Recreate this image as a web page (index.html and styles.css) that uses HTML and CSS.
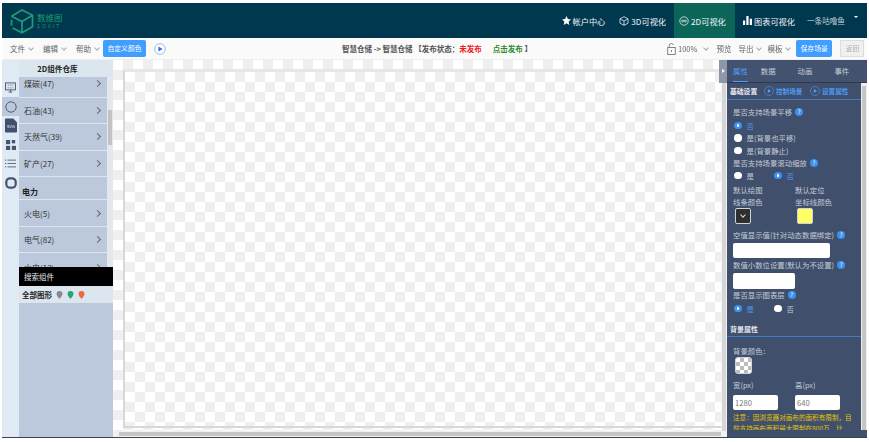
FILE: index.html
```html
<!DOCTYPE html>
<html>

<head>
  <title>数维图 2D可视化</title>
  <link rel="stylesheet" href="styles.css">
</head>

<body>
  <div class="app">
    <div class="header">
      <div class="logo">
        <svg class="logo-mark" width="28" height="28" viewBox="0 0 24 24" fill="none" stroke="#1f9c72" stroke-width="1.5">
          <path d="M3 8 L12 2.5 L21 7 V17 L12 22 L4 18" />
          <path d="M3 8 L12 12.5 L21 7 M12 12.5 V22 M3 11 V16" />
        </svg>
        <div class="logo-text">
          <div class="logo-cn">数维图</div>
          <div class="logo-en">SOVIT</div>
        </div>
      </div>
      <div class="nav">
        <a class="nav-item">
          <svg width="9" height="9" viewBox="0 0 10 10"><path fill="#fff" d="M5 0 L6.5 3.4 L10 3.8 L7.4 6.2 L8.1 10 L5 8.1 L1.9 10 L2.6 6.2 L0 3.8 L3.5 3.4 Z" /></svg>
          帐户中心
        </a>
        <a class="nav-item">
          <svg width="10" height="10" viewBox="0 0 10 10" fill="none" stroke="#e4ecef" stroke-width=".8"><path d="M5 .7 L9 2.8 V7.2 L5 9.3 L1 7.2 V2.8 Z M1 2.8 L5 5 L9 2.8 M5 5 V9.3" /></svg>
          3D可视化
        </a>
        <a class="nav-item nav-active">
          <svg width="10" height="10" viewBox="0 0 10 10" fill="none" stroke="#e4ecef" stroke-width=".8"><circle cx="5" cy="5" r="4.2" /><circle cx="3.6" cy="5" r="1" /><circle cx="6.4" cy="5" r="1" /></svg>
          2D可视化
        </a>
        <a class="nav-item">
          <svg width="9" height="9" viewBox="0 0 10 10"><path fill="#fff" d="M0 5 H2.4 V10 H0 Z M3.7 0 H6.2 V10 H3.7 Z M7.5 3 H10 V10 H7.5 Z" /></svg>
          图表可视化
        </a>
        <a class="nav-item nav-user">一条咕噜鱼<span class="caret"></span></a>
      </div>
    </div>

    <div class="toolbar">
      <div class="tool-left">
        <span class="menu">文件<i class="chev"></i></span>
        <span class="menu">编辑<i class="chev"></i></span>
        <span class="menu">帮助<i class="chev"></i></span>
        <span class="btn-blue btn-color">自定义颜色</span>
        <svg class="play-top" width="12" height="12" viewBox="0 0 12 12"><circle cx="6" cy="6" r="5.3" fill="#fff" stroke="#9db8e8" /><path d="M4.4 3.4 L8.6 6 L4.4 8.6 Z" fill="#2f6fe0" /></svg>
      </div>
      <div class="tool-title">智慧仓储 -&gt; 智慧仓储 【发布状态：<span class="red">未发布</span><span class="green">点击发布</span> 】</div>
      <div class="tool-right">
        <svg width="9" height="12" viewBox="0 0 9 12" fill="none" stroke="#777" stroke-width=".9"><rect x=".7" y="4.5" width="7.6" height="7" /><path d="M2.2 4.5 V2.2 A2.2 2 0 0 1 6.5 2" /><path d="M4.5 7 V9" /></svg>
        <span class="menu zoom-val">100%<i class="chev"></i></span>
        <span class="menu preview">预览</span>
        <span class="menu">导出<i class="chev"></i></span>
        <span class="menu">模板<i class="chev"></i></span>
        <span class="btn-blue btn-save">保存场景</span>
        <span class="btn-back">返回</span>
      </div>
    </div>

    <div class="main">
      <div class="rail">
        <div class="rail-top"></div>
        <div class="rail-icon">
          <svg width="11" height="11" viewBox="0 0 12 12" fill="none" stroke="#46566f"><rect x=".6" y="1" width="10.8" height="7.6" fill="#dfe6ee" /><path d="M4 11 H8 M6 8.6 V11" /><path d="M3 6.4 H9 M3 3.4 H9" stroke-width=".7" stroke-dasharray="1.5 1" /></svg>
        </div>
        <div class="rail-icon rail-on">
          <svg width="12" height="12" viewBox="0 0 13 13" fill="none" stroke="#46566f"><circle cx="6.5" cy="6.5" r="5.6" /></svg>
        </div>
        <div class="rail-icon">
          <svg width="12" height="15" viewBox="0 0 13 15"><path fill="#3f4f6c" d="M1 0 H9 L13 4 V14 Q13 15 12 15 H1 Q0 15 0 14 V1 Q0 0 1 0 Z" /><text x="6.5" y="10" text-anchor="middle" class="svg-label">SVG</text></svg>
        </div>
        <div class="rail-icon">
          <svg width="10" height="10" viewBox="0 0 12 12" fill="#46566f"><rect x="0" y="0" width="5" height="5" /><rect x="7" y="0" width="4" height="4" /><rect x="0" y="7" width="5" height="5" /><rect x="7" y="7" width="5" height="5" /></svg>
        </div>
        <div class="rail-icon">
          <svg width="11" height="9" viewBox="0 0 13 10" stroke="#46566f"><path d="M0 1 H1.5 M3 1 H13 M0 5 H1.5 M3 5 H13 M0 9 H1.5 M3 9 H13" /></svg>
        </div>
        <div class="rail-icon">
          <svg width="12" height="12" viewBox="0 0 13 13" fill="none" stroke="#46566f" stroke-width="2.4"><rect x="1.4" y="1.4" width="10.2" height="10.2" rx="4" /></svg>
        </div>
      </div>

      <div class="lib">
        <div class="lib-title">2D组件仓库</div>
        <div class="lib-scroll">
          <div class="lib-list">
            <div class="lib-row lib-row-first">煤碳(47)<i class="arrow"></i></div>
            <div class="lib-row">石油(43)<i class="arrow"></i></div>
            <div class="lib-row">天然气(39)<i class="arrow"></i></div>
            <div class="lib-row">矿产(27)<i class="arrow"></i></div>
            <div class="lib-group">电力</div>
            <div class="lib-row">火电(5)<i class="arrow"></i></div>
            <div class="lib-row">电气(82)<i class="arrow"></i></div>
            <div class="lib-row lib-row-cut">水电(13)<i class="arrow"></i></div>
          </div>
          <div class="lib-bar"><div class="lib-thumb"></div></div>
        </div>
        <div class="lib-search">搜索组件</div>
        <div class="lib-all">全部图形
          <svg width="7" height="8" viewBox="0 0 7 8"><path fill="#8a8a8a" d="M3.5 0 A3 3 0 0 1 6.5 3 Q6.5 5 3.5 8 Q.5 5 .5 3 A3 3 0 0 1 3.5 0 Z" /></svg>
          <svg width="7" height="8" viewBox="0 0 7 8"><path fill="#2aa56f" d="M3.5 0 A3 3 0 0 1 6.5 3 Q6.5 5 3.5 8 Q.5 5 .5 3 A3 3 0 0 1 3.5 0 Z" /></svg>
          <svg width="7" height="8" viewBox="0 0 7 8"><path fill="#f0683c" d="M3.5 0 A3 3 0 0 1 6.5 3 Q6.5 5 3.5 8 Q.5 5 .5 3 A3 3 0 0 1 3.5 0 Z" /></svg>
        </div>
        <div class="lib-rest"></div>
      </div>

      <div class="stage">
        <div class="stage-top">
          <div class="stage-view">
            <div class="sheet"></div>
          </div>
          <div class="stage-vbar"><div class="stage-vthumb"></div></div>
        </div>
        <div class="stage-bar"><div class="stage-thumb"></div></div>
        <div class="handle"></div>
      </div>

      <div class="props">
        <div class="tabs">
          <span class="tab tab-on">属性</span>
          <span class="tab">数据</span>
          <span class="tab">动画</span>
          <span class="tab">事件</span>
        </div>
        <div class="props-body">
          <div class="props-scroll">
            <div class="sub-head">
              <span class="sub-title">基础设置</span>
              <span class="sub-link"><svg width="10" height="10" viewBox="0 0 10 10"><circle cx="5" cy="5" r="4.5" fill="none" stroke="#4d8fe6" stroke-width=".7" /><path d="M3.8 3 L7 5 L3.8 7 Z" fill="#5aa2f5" /></svg>控制场景</span>
              <span class="sub-link"><svg width="10" height="10" viewBox="0 0 10 10"><circle cx="5" cy="5" r="4.5" fill="none" stroke="#4d8fe6" stroke-width=".7" /><path d="M3.8 3 L7 5 L3.8 7 Z" fill="#5aa2f5" /></svg>设置属性</span>
            </div>

            <div class="form">
              <div class="label label-first">是否支持场景平移<i class="help">?</i></div>
              <div class="radio-line"><i class="radio radio-on"></i><span class="blue">否</span></div>
              <div class="radio-line"><i class="radio"></i>是(背景也平移)</div>
              <div class="radio-line"><i class="radio"></i>是(背景静止)</div>
              <div class="label">是否支持场景滚动缩放<i class="help">?</i></div>
              <div class="radio-pair">
                <div class="radio-line"><i class="radio"></i>是</div>
                <div class="radio-line"><i class="radio radio-on"></i><span class="blue">否</span></div>
              </div>
              <div class="two-col">
                <div class="label">默认绘图</div>
                <div class="label">默认定位</div>
                <div class="label">线条颜色</div>
                <div class="label">坐标线颜色</div>
                <div class="swatch swatch-dark"><i class="chev chev-light"></i></div>
                <div class="swatch swatch-yellow"></div>
              </div>
              <div class="label label-gap">空值显示值(针对动态数据绑定)<i class="help">?</i></div>
              <div class="field field-wide"></div>
              <div class="label">数值小数位设置(默认为不设置)<i class="help">?</i></div>
              <div class="field field-short"></div>
              <div class="label">是否显示图表层<i class="help">?</i></div>
              <div class="radio-pair radio-pair-tall">
                <div class="radio-line"><i class="radio radio-on"></i><span class="blue">是</span></div>
                <div class="radio-line"><i class="radio"></i>否</div>
              </div>
            </div>

            <div class="section-title">背景属性</div>
            <div class="form form-bg">
              <div class="label">背景颜色：</div>
              <div class="swatch swatch-grid"></div>
              <div class="size-row">
                <div class="size-col"><div class="label">宽(px)</div><div class="field field-size">1280</div></div>
                <div class="size-col"><div class="label">高(px)</div><div class="field field-size">640</div></div>
              </div>
              <div class="note">注意：因浏览器对画布的面积有限制，目前支持画布面积最大限制在800万，比</div>
            </div>
          </div>
          <div class="props-bar"><div class="props-thumb"></div></div>
        </div>
      </div>
    </div>
  </div>
</body>

</html>
```

FILE: styles.css
```css
* {
  box-sizing: border-box;
}

body {
  margin: 0;
  background: #fff;
  font-family: "Noto Sans CJK SC", "Open Sans", sans-serif;
  font-size: 8px;
  overflow: hidden;
}

.app {
  width: 865px;
  height: 435px;
  margin: 3px 0 0 2px;
  display: flex;
  flex-direction: column;
  border-bottom: 1px solid #3c4350;
  filter: blur(0.35px);
}

/* top bar */
.header {
  height: 35px;
  background: #00384f;
  display: flex;
  justify-content: space-between;
  flex: none;
}

.logo {
  display: flex;
  align-items: center;
  gap: 1px;
  padding-left: 6px;
}

.logo-cn {
  color: #1f9c72;
  font-size: 8.5px;
  line-height: 10px;
}

.logo-en {
  color: #1f9c72;
  font-size: 5px;
  line-height: 7px;
  letter-spacing: 2px;
}

.nav {
  display: flex;
  align-items: stretch;
}

.nav-item {
  display: flex;
  align-items: center;
  gap: 2px;
  padding: 0 6px;
  margin-left: 2px;
  color: #f2f6f7;
  font-size: 8.2px;
  white-space: nowrap;
}

.nav-active {
  background: #0b6558;
  width: 61px;
  padding: 0 5px;
}

.nav-user {
  color: #c3ced4;
  width: 66px;
  padding: 0 0 0 6px;
  margin: 0;
  font-size: 7.6px;
}

.caret {
  width: 0;
  height: 0;
  margin: -5px 0 0 7px;
  border: 2px solid transparent;
  border-top: 2.5px solid #fff;
}

/* tool row */
.toolbar {
  height: 22px;
  flex: none;
  display: flex;
  align-items: center;
  background: #fafafa;
  border-bottom: 1px solid #eee;
  color: #666;
  font-size: 7.5px;
}

.tool-left {
  width: 340px;
  flex: none;
  display: flex;
  align-items: center;
  padding-left: 8px;
}

.menu {
  display: inline-flex;
  flex: none;
  align-items: center;
  margin-right: 10px;
  white-space: nowrap;
}

.chev {
  display: inline-block;
  width: 4px;
  height: 4px;
  margin: -2px 0 0 4px;
  border-right: 1px solid #aaa;
  border-bottom: 1px solid #aaa;
  transform: rotate(45deg);
}

.btn-blue {
  flex: none;
  background: #409eff;
  color: #fff;
  border-radius: 2px;
  height: 17px;
  line-height: 17px;
  text-align: center;
  font-size: 6.8px;
}

.btn-color {
  width: 43px;
  margin-left: -6px;
}

.play-top {
  margin-left: 8px;
}

.tool-title {
  flex: 1;
  color: #555;
  font-weight: 700;
  white-space: pre;
}

.red {
  color: #f01818;
  margin-right: 11px;
}

.green {
  color: #2d8a2d;
}

.tool-right {
  display: flex;
  align-items: center;
  width: 200px;
  flex: none;
}

.tool-right .menu {
  margin-right: 6px;
}

.tool-right .zoom-val {
  margin-left: 2px;
  margin-right: 8px;
}

.zoom-val .chev {
  margin-left: 7px;
}

.tool-right .preview {
  margin-right: 7px;
}

.btn-back {
  flex: none;
  width: 24px;
  height: 17px;
  line-height: 15px;
  margin-left: 8px;
  text-align: center;
  border: 1px solid #ddd;
  background: #f0f0f0;
  color: #aaa;
  font-size: 6.5px;
}

.btn-save {
  width: 36px;
}

/* main area */
.main {
  flex: 1;
  min-height: 0;
  display: flex;
}

.rail {
  width: 17px;
  flex: none;
  background: #e0eaf4;
}

.rail-top {
  height: 18px;
}

.rail-icon {
  height: 19px;
  display: flex;
  align-items: center;
  justify-content: center;
}

.rail-on {
  background: #bcc9dc;
}

.svg-label {
  fill: #fff;
  font-size: 4px;
  font-family: "Liberation Sans", sans-serif;
}

.lib {
  width: 94px;
  flex: none;
  display: flex;
  flex-direction: column;
  background: #bcc9dc;
  color: #333;
}

.lib-title {
  height: 17px;
  flex: none;
  line-height: 17px;
  background: #dce6ee;
  color: #222;
  font-weight: 700;
  font-size: 7.6px;
  text-align: center;
  padding-right: 17px;
}

.lib-scroll {
  height: 190px;
  flex: none;
  display: flex;
  overflow: hidden;
  background: #dce6ee;
}

.lib-list {
  width: 88px;
  flex: none;
}

.lib-row {
  height: 25.6px;
  margin-bottom: 1px;
  padding: 0 5px;
  display: flex;
  align-items: center;
  justify-content: space-between;
  background: #bcc9dc;
  font-size: 8px;
}

.lib-row-first {
  height: 19.5px;
  padding-bottom: 6px;
}

.lib-row-cut {
  height: 27px;
  padding-top: 2px;
}

.lib-group {
  height: 22px;
  padding: 7px 0 0 3px;
  line-height: 16px;
  font-weight: 700;
  color: #222;
  background: #bcc9dc;
  margin-bottom: 1px;
}

.arrow {
  width: 5px;
  height: 5px;
  margin-right: 2px;
  border-top: 1px solid #666;
  border-right: 1px solid #666;
  transform: rotate(45deg);
}

.lib-bar {
  width: 6px;
  background: #e4e8ec;
}

.lib-thumb {
  width: 4px;
  height: 35px;
  margin: 33px 0 0 1px;
  background: #c4c4c4;
}

.lib-search {
  height: 19px;
  flex: none;
  background: #000;
  color: #e8e8e8;
  line-height: 19px;
  padding-left: 5px;
  font-size: 7.5px;
  overflow: hidden;
}

.lib-all {
  height: 17px;
  flex: none;
  display: flex;
  align-items: center;
  gap: 4px;
  padding-left: 3px;
  background: #dce6ee;
  color: #222;
  font-weight: 700;
  font-size: 7.5px;
}

.lib-rest {
  flex: 1;
}

/* canvas */
.stage {
  width: 614px;
  flex: none;
  display: flex;
  flex-direction: column;
  position: relative;
  background-color: #fff;
  background-image: conic-gradient(#efefef 25%, #fff 0 50%, #efefef 0 75%, #fff 0);
  background-size: 20px 20px;
}

.stage-top {
  flex: 1;
  min-height: 0;
  display: flex;
}

.stage-view {
  flex: 1;
  min-width: 0;
  padding: 9px 0 3px 10px;
  overflow: hidden;
}

.sheet {
  width: 640px;
  height: 100%;
  background-image: conic-gradient(#efefef 25%, #fff 0 50%, #efefef 0 75%, #fff 0);
  background-size: 20px 20px;
  border-top: 3px solid #e6e6e6;
  border-left: 2px solid #d8d8d8;
  border-bottom: 2px solid #d8d8d8;
}

.stage-vbar {
  width: 6px;
  flex: none;
  padding: 23px 1px 0;
  background: #f1f1f1;
}

.stage-vthumb {
  height: 100%;
  background: #d6d6d6;
}

.stage-bar {
  height: 6px;
  flex: none;
  padding: 1px 6px 0 6px;
  background: #f1f1f1;
}

.stage-thumb {
  height: 4px;
  background: #c6c6c6;
}

.handle {
  position: absolute;
  right: 0;
  top: 0;
  width: 8px;
  height: 23px;
  background: #8d97a8;
}

.handle::after {
  content: "";
  position: absolute;
  left: 3px;
  top: 9px;
  border: 2.5px solid transparent;
  border-left: 3px solid #fff;
}

/* properties */
.props {
  flex: 1;
  min-width: 0;
  display: flex;
  flex-direction: column;
  background: #3f4f6c;
  color: #c6ccd6;
  font-size: 7.4px;
}

.tabs {
  height: 23px;
  flex: none;
  display: flex;
  background: #43536f;
  border-bottom: 1px solid #2b3950;
  padding-left: 6px;
}

.tab {
  width: 15px;
  margin-right: 22px;
  text-align: center;
  line-height: 22px;
  white-space: nowrap;
}

.tab-on {
  color: #4da0ff;
  border-bottom: 1px solid #4da0ff;
  margin-right: 13px;
}

.props-body {
  flex: 1;
  min-height: 0;
  display: flex;
  margin-bottom: 7px;
}

.props-scroll {
  width: 134px;
  flex: none;
  overflow: hidden;
}

.props-bar {
  flex: 1;
  padding: 3px 1px 0;
  background: #eee;
}

.props-thumb {
  height: 100%;
  background: #c6c6c6;
}

.sub-head {
  height: 17px;
  display: flex;
  align-items: center;
  padding-left: 3px;
  border-bottom: 1px solid #3f7cc4;
}

.sub-title {
  width: 34px;
  flex: none;
  color: #e8ecf2;
  font-weight: 700;
  font-size: 6.8px;
}

.sub-link {
  display: flex;
  align-items: center;
  gap: 2px;
  width: 46px;
  flex: none;
  color: #4d9cf5;
  font-weight: 700;
  font-size: 6.6px;
}

.form {
  padding: 6px 0 0 6px;
}

.form-bg {
  padding-top: 8px;
}

.label {
  height: 12px;
  line-height: 12px;
  display: flex;
  align-items: center;
  white-space: nowrap;
}

.label-first {
  margin-bottom: 1px;
}

.label-gap {
  margin-top: 5px;
}

.help {
  width: 8px;
  height: 8px;
  margin-left: 3px;
  border-radius: 50%;
  background: #3a93f0;
  color: #fff;
  font-size: 6px;
  font-style: normal;
  line-height: 8px;
  text-align: center;
}

.radio-line {
  height: 12.5px;
  display: flex;
  align-items: center;
  gap: 5px;
  padding-left: 1px;
  white-space: nowrap;
}

.radio {
  width: 7.5px;
  height: 7.5px;
  flex: none;
  border-radius: 50%;
  background: #fff;
}

.radio-on {
  background: #3a93f0;
  position: relative;
}

.radio-on::after {
  content: "";
  position: absolute;
  left: 2.5px;
  top: 2.5px;
  width: 2.5px;
  height: 2.5px;
  border-radius: 50%;
  background: #fff;
}

.blue {
  color: #4a9df5;
}

.radio-pair {
  display: grid;
  grid-template-columns: 40px 1fr;
  height: 14px;
  align-items: center;
}

.radio-pair-tall {
  height: 16px;
}

.two-col {
  display: grid;
  grid-template-columns: 62px 1fr;
  margin-top: 1px;
}

.swatch {
  width: 16px;
  height: 16px;
  margin-left: 2px;
  border-radius: 2px;
  border: 1px solid #cfd4db;
}

.swatch-dark {
  background: #2f2f2f;
  display: flex;
  align-items: center;
  justify-content: center;
}

.chev-light {
  border-color: #ddd;
  margin: -2px 0 0;
}

.swatch-yellow {
  background: #ffff66;
}

.swatch-grid {
  width: 17px;
  height: 17px;
  border-radius: 3px;
  background-color: #fff;
  background-image: conic-gradient(#bbb 25%, #fff 0 50%, #bbb 0 75%, #fff 0);
  background-size: 8px 8px;
}

.field {
  height: 15.5px;
  margin: 2px 0 0;
  border-radius: 2px;
  background: #fff;
  color: #777;
  font-size: 7.6px;
  line-height: 16px;
  padding-left: 2px;
}

.field-wide {
  width: 97px;
  margin-bottom: 1px;
}

.field-short {
  width: 62px;
}

.field-size {
  width: 45px;
  margin-top: 4px;
}

.section-title {
  height: 16px;
  margin-top: 4px;
  padding-left: 3px;
  line-height: 16px;
  color: #e4e8ee;
  font-weight: 700;
  font-size: 7px;
  border-bottom: 1px solid #3f7cc4;
}

.size-row {
  display: grid;
  grid-template-columns: 62px 1fr;
  margin-top: 5px;
}

.note {
  width: 124px;
  margin-top: 2px;
  color: #e6c400;
  font-size: 6.6px;
  line-height: 11px;
}
```
